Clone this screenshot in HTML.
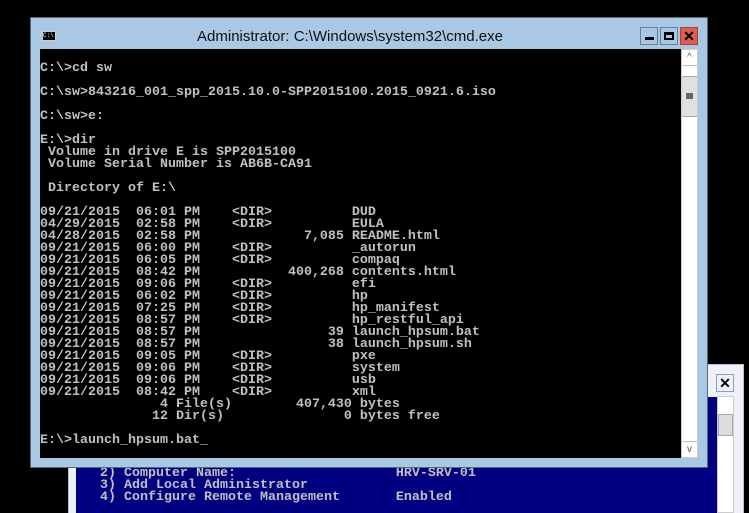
<!DOCTYPE html>
<html style="overflow:hidden;height:513px"><head><style>
body{margin:0;width:749px;height:513px;background:#000;position:relative;overflow:hidden;font-family:"Liberation Sans",sans-serif}
.mono{font-family:"Liberation Mono",monospace;font-size:13.33px;line-height:12px;white-space:pre;color:#c0c0c0;font-weight:bold}
div{box-sizing:border-box}
</style></head><body>
<div style="position:absolute;left:68px;top:364px;width:676px;height:149px;background:#eef0fa;border:1px solid #b8c0d0;border-bottom:none"></div>
<div style="position:absolute;left:76px;top:397px;width:641px;height:116px;background:#000080"></div>
<div class="mono" style="position:absolute;left:76px;top:444px;">   1) ____________

   2) Computer Name:                    HRV-SRV-01
   3) Add Local Administrator
   4) Configure Remote Management       Enabled</div>
<div style="position:absolute;left:717px;top:396px;width:17px;height:117px;background:#fff;border:1px solid #ccc"></div>
<div style="position:absolute;left:718px;top:414px;width:15px;height:22px;background:#ddd;border:1px solid #aaa"></div>
<div style="position:absolute;left:716px;top:374px;width:18px;height:18px;border:1px solid #8aa0b8;font-size:14px;font-weight:bold;text-align:center;line-height:16px">✕</div>

<div style="position:absolute;left:30px;top:17px;width:678px;height:451px;background:#a9c8e4;border:1px solid #5a6470"></div>
<div style="position:absolute;left:42px;top:31px;width:14px;height:10px;background:#000;border:1px solid #ccc;color:#fff;font-size:6px;line-height:8px;font-family:'Liberation Mono',monospace">C:\</div>
<div style="position:absolute;left:0;width:700px;top:28px;text-align:center;font-size:15px;color:#111">Administrator: C:\Windows\system32\cmd.exe</div>
<div style="position:absolute;left:640px;top:27px;width:18px;height:18px;border:1px solid #6a7f98;background:#a9c8e4"><div style="position:absolute;left:4px;top:9px;width:9px;height:3px;background:#000"></div></div>
<div style="position:absolute;left:660px;top:27px;width:18px;height:18px;border:1px solid #6a7f98;background:#a9c8e4"><div style="position:absolute;left:3px;top:4px;width:10px;height:8px;border:2px solid #000;border-top-width:3px"></div></div>
<div style="position:absolute;left:680px;top:27px;width:18px;height:18px;border:1px solid #b04030;background:#d9604c;color:#000;font-weight:bold;font-size:14px;line-height:16px;text-align:center">✕</div>
<div style="position:absolute;left:40px;top:49px;width:641px;height:409px;background:#000"></div>
<div style="position:absolute;left:681px;top:49px;width:17px;height:409px;background:#fff;border:1px solid #ccc"></div>
<div style="position:absolute;left:682px;top:50px;width:15px;height:16px;border-bottom:1px solid #bbb;color:#555;font-size:10px;text-align:center;line-height:16px">^</div>
<div style="position:absolute;left:682px;top:76px;width:15px;height:41px;background:#e0e0e0;border:1px solid #aaa;border-left:none;border-right:none"><div style="position:absolute;left:4px;top:16px;width:7px;height:6px;border-top:2px solid #666;border-bottom:2px solid #666"></div><div style="position:absolute;left:4px;top:18px;width:7px;height:2px;background:#666"></div></div>
<div style="position:absolute;left:682px;top:441px;width:15px;height:16px;border-top:1px solid #bbb;color:#555;font-size:10px;text-align:center;line-height:16px">v</div>
<div class="mono" style="position:absolute;left:40px;top:63px;">C:\>cd sw

C:\sw>843216_001_spp_2015.10.0-SPP2015100.2015_0921.6.iso

C:\sw>e:

E:\>dir
 Volume in drive E is SPP2015100
 Volume Serial Number is AB6B-CA91

 Directory of E:\

09/21/2015  06:01 PM    &lt;DIR&gt;          DUD
04/29/2015  02:58 PM    &lt;DIR&gt;          EULA
04/28/2015  02:58 PM             7,085 README.html
09/21/2015  06:00 PM    &lt;DIR&gt;          _autorun
09/21/2015  06:05 PM    &lt;DIR&gt;          compaq
09/21/2015  08:42 PM           400,268 contents.html
09/21/2015  09:06 PM    &lt;DIR&gt;          efi
09/21/2015  06:02 PM    &lt;DIR&gt;          hp
09/21/2015  07:25 PM    &lt;DIR&gt;          hp_manifest
09/21/2015  08:57 PM    &lt;DIR&gt;          hp_restful_api
09/21/2015  08:57 PM                39 launch_hpsum.bat
09/21/2015  08:57 PM                38 launch_hpsum.sh
09/21/2015  09:05 PM    &lt;DIR&gt;          pxe
09/21/2015  09:06 PM    &lt;DIR&gt;          system
09/21/2015  09:06 PM    &lt;DIR&gt;          usb
09/21/2015  08:42 PM    &lt;DIR&gt;          xml
               4 File(s)        407,430 bytes
              12 Dir(s)               0 bytes free

E:\>launch_hpsum.bat_</div>
</body></html>
